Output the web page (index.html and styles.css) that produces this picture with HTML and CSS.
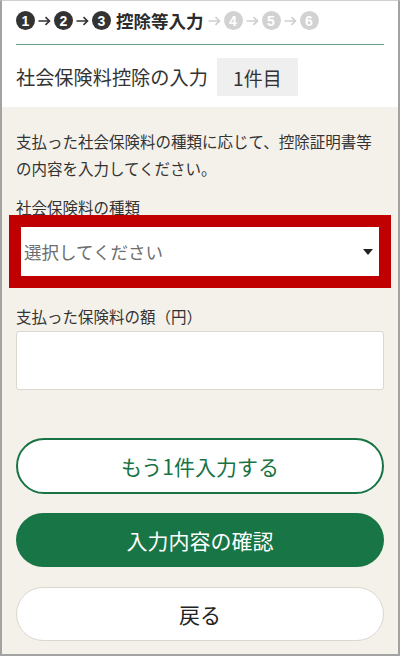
FILE: index.html
```html
<!DOCTYPE html>
<html lang="ja">
<head>
<meta charset="utf-8">
<link rel="stylesheet" href="styles.css">
</head>
<body>
<div class="frame">
  <header class="head">
    <div class="steps">
      <span class="num done">1</span>
      <svg class="arrow dark" viewBox="0 0 13 10" width="13" height="10"><path d="M0.5 5H11.5M7.5 1.2L11.5 5L7.5 8.8" fill="none" stroke="currentColor" stroke-width="1.6"/></svg>
      <span class="num done">2</span>
      <svg class="arrow dark" viewBox="0 0 13 10" width="13" height="10"><path d="M0.5 5H11.5M7.5 1.2L11.5 5L7.5 8.8" fill="none" stroke="currentColor" stroke-width="1.6"/></svg>
      <span class="num done">3</span>
      <span class="step-name">控除等入力</span>
      <svg class="arrow light" viewBox="0 0 13 10" width="13" height="10"><path d="M0.5 5H11.5M7.5 1.2L11.5 5L7.5 8.8" fill="none" stroke="currentColor" stroke-width="1.6"/></svg>
      <span class="num todo">4</span>
      <svg class="arrow light" viewBox="0 0 13 10" width="13" height="10"><path d="M0.5 5H11.5M7.5 1.2L11.5 5L7.5 8.8" fill="none" stroke="currentColor" stroke-width="1.6"/></svg>
      <span class="num todo">5</span>
      <svg class="arrow light" viewBox="0 0 13 10" width="13" height="10"><path d="M0.5 5H11.5M7.5 1.2L11.5 5L7.5 8.8" fill="none" stroke="currentColor" stroke-width="1.6"/></svg>
      <span class="num todo">6</span>
    </div>
    <div class="title-row">
      <h1 class="title">社会保険料控除の入力</h1>
      <span class="count">1件目</span>
    </div>
  </header>
  <main class="body">
    <p class="lead">支払った社会保険料の種類に応じて、控除証明書等の内容を入力してください。</p>
    <div class="field">
      <div class="label">社会保険料の種類</div>
      <div class="select highlight">
        <span class="placeholder">選択してください</span>
        <svg class="caret" viewBox="0 0 10 6" width="10" height="6"><path d="M0 0H10L5 6Z" fill="#222"/></svg>
      </div>
    </div>
    <div class="field">
      <div class="label">支払った保険料の額（円）</div>
      <div class="input"></div>
    </div>
    <div class="buttons">
      <div class="btn outline">もう1件入力する</div>
      <div class="btn primary">入力内容の確認</div>
      <div class="btn plain">戻る</div>
    </div>
  </main>
</div>
</body>
</html>
```

FILE: styles.css
```css
html, body {
  margin: 0;
  padding: 0;
}
body {
  font-family: "Noto Sans CJK JP", "Noto Sans", sans-serif;
  color: #333;
}
.frame {
  width: 400px;
  height: 656px;
  box-sizing: border-box;
  border: 2px solid #a3a3a3;
  border-top: 1px solid #cfcfcf;
  background: #f4f1eb;
  display: flex;
  flex-direction: column;
  overflow: hidden;
}
.head {
  background: #fff;
  padding: 10px 14px 11px;
}
.steps {
  display: flex;
  align-items: center;
  height: 19px;
  padding-bottom: 14px;
  border-bottom: 1px solid #6f9f87;
}
.num {
  width: 19px;
  height: 19px;
  border-radius: 50%;
  display: flex;
  align-items: center;
  justify-content: center;
  color: #fff;
  font-family: "Liberation Sans", sans-serif;
  font-weight: bold;
  font-size: 14px;
  line-height: 1;
}
.num.done { background: #333; }
.num.todo { background: #d2d2d2; }
.arrow {
  margin: 0 3px;
}
.arrow.dark { color: #333; }
.arrow.light { color: #cfcfcf; }
.step-name {
  font-weight: bold;
  font-size: 17.5px;
  color: #2b2b2b;
  margin: 0 1px 0 5px;
  line-height: 19px;
}
.title-row {
  display: flex;
  align-items: center;
  margin-top: 13px;
}
.title {
  margin: 0;
  font-size: 19.2px;
  font-weight: normal;
  color: #333;
  line-height: 38px;
}
.count {
  margin-left: 9px;
  width: 81px;
  height: 38px;
  background: #efefef;
  font-size: 19px;
  display: flex;
  align-items: center;
  justify-content: center;
  color: #333;
}
.body {
  padding: 21px 14px 0;
}
.lead {
  margin: 0;
  font-size: 15.5px;
  line-height: 27px;
  color: #333;
}
.field {
  margin-top: 14px;
}
.field + .field {
  margin-top: 24px;
}
.label {
  font-size: 15.5px;
  line-height: 22px;
  margin-bottom: 4px;
  color: #333;
}
.select {
  height: 59px;
  background: #fff;
  border: 1px solid #ddd;
  box-sizing: border-box;
  display: flex;
  align-items: center;
  justify-content: space-between;
  padding: 0 10px 0 7px;
}
.highlight {
  outline: 12px solid #c00000;
  outline-offset: -5px;
}
.placeholder {
  font-size: 17.5px;
  color: #6e6e6e;
}
.input {
  height: 59px;
  background: #fff;
  border: 1px solid #dcd8d0;
  border-radius: 3px;
  box-sizing: border-box;
}
.buttons {
  margin-top: 48px;
  display: flex;
  flex-direction: column;
  gap: 20px;
}
.btn {
  height: 54px;
  box-sizing: border-box;
  border-radius: 27px;
  display: flex;
  align-items: center;
  justify-content: center;
  font-size: 21px;
}
.btn.outline {
  height: 56px;
  border-radius: 28px;
  background: #fff;
  border: 2px solid #187344;
  color: #187344;
}
.btn.primary {
  background: #187545;
  color: #fff;
  margin-top: -1px;
}
.btn.plain {
  background: #fff;
  border: 1px solid #dcd6cc;
  color: #222;
}
```
